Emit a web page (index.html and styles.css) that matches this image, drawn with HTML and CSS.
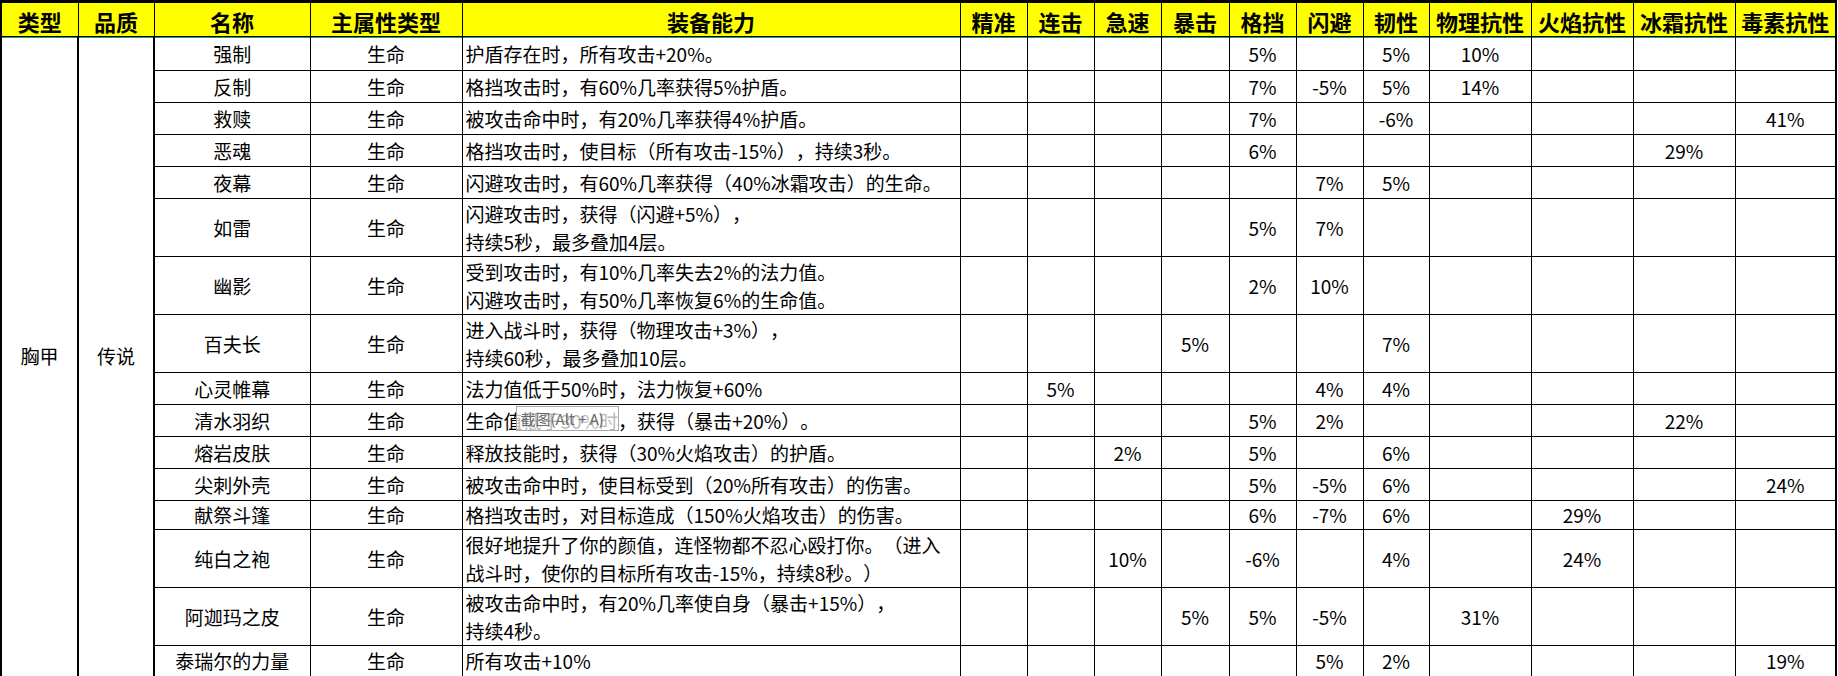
FILE: index.html
```html
<!DOCTYPE html>
<html lang="zh-CN">
<head>
<meta charset="utf-8">
<title>胸甲 传说</title>
<link rel="stylesheet" href="styles.css">
</head>
<body>
<table class="sheet">
  <colgroup>
    <col class="c-type"><col class="c-qual"><col class="c-name"><col class="c-main"><col class="c-desc">
    <col class="c-s"><col class="c-s"><col class="c-s"><col class="c-s8"><col class="c-s"><col class="c-s"><col class="c-s6">
    <col class="c-r"><col class="c-r"><col class="c-r"><col class="c-r1">
  </colgroup>
  <thead>
    <tr class="head">
      <th>类型</th><th>品质</th><th>名称</th><th>主属性类型</th><th>装备能力</th>
      <th>精准</th><th>连击</th><th>急速</th><th>暴击</th><th>格挡</th><th>闪避</th><th>韧性</th>
      <th>物理抗性</th><th>火焰抗性</th><th>冰霜抗性</th><th>毒素抗性</th>
    </tr>
  </thead>
  <tbody>
    <tr class="r34 first">
      <td class="type" rowspan="16">胸甲</td><td class="qual" rowspan="16">传说</td>
      <td>强制</td><td>生命</td><td class="desc">护盾存在时，所有攻击+20%。</td>
      <td></td><td></td><td></td><td></td><td>5%</td><td></td><td>5%</td><td>10%</td><td></td><td></td><td class="last"></td>
    </tr>
    <tr class="r32">
      <td>反制</td><td>生命</td><td class="desc">格挡攻击时，有60%几率获得5%护盾。</td>
      <td></td><td></td><td></td><td></td><td>7%</td><td>-5%</td><td>5%</td><td>14%</td><td></td><td></td><td class="last"></td>
    </tr>
    <tr class="r32">
      <td>救赎</td><td>生命</td><td class="desc">被攻击命中时，有20%几率获得4%护盾。</td>
      <td></td><td></td><td></td><td></td><td>7%</td><td></td><td>-6%</td><td></td><td></td><td></td><td class="last">41%</td>
    </tr>
    <tr class="r32">
      <td>恶魂</td><td>生命</td><td class="desc">格挡攻击时，使目标（所有攻击-15%），持续3秒。</td>
      <td></td><td></td><td></td><td></td><td>6%</td><td></td><td></td><td></td><td></td><td>29%</td><td class="last"></td>
    </tr>
    <tr class="r32">
      <td>夜幕</td><td>生命</td><td class="desc">闪避攻击时，有60%几率获得（40%冰霜攻击）的生命。</td>
      <td></td><td></td><td></td><td></td><td></td><td>7%</td><td>5%</td><td></td><td></td><td></td><td class="last"></td>
    </tr>
    <tr class="r58">
      <td>如雷</td><td>生命</td><td class="desc">闪避攻击时，获得（闪避+5%），<br>持续5秒，最多叠加4层。</td>
      <td></td><td></td><td></td><td></td><td>5%</td><td>7%</td><td></td><td></td><td></td><td></td><td class="last"></td>
    </tr>
    <tr class="r58">
      <td>幽影</td><td>生命</td><td class="desc">受到攻击时，有10%几率失去2%的法力值。<br>闪避攻击时，有50%几率恢复6%的生命值。</td>
      <td></td><td></td><td></td><td></td><td>2%</td><td>10%</td><td></td><td></td><td></td><td></td><td class="last"></td>
    </tr>
    <tr class="r58">
      <td>百夫长</td><td>生命</td><td class="desc">进入战斗时，获得（物理攻击+3%），<br>持续60秒，最多叠加10层。</td>
      <td></td><td></td><td></td><td>5%</td><td></td><td></td><td>7%</td><td></td><td></td><td></td><td class="last"></td>
    </tr>
    <tr class="r32">
      <td>心灵帷幕</td><td>生命</td><td class="desc">法力值低于50%时，法力恢复+60%</td>
      <td></td><td>5%</td><td></td><td></td><td></td><td>4%</td><td>4%</td><td></td><td></td><td></td><td class="last"></td>
    </tr>
    <tr class="r32">
      <td>清水羽织</td><td>生命</td><td class="desc tipcell">生命值低于30%时，获得（暴击+20%）。<span class="tip">截图(Alt + A)</span></td>
      <td></td><td></td><td></td><td></td><td>5%</td><td>2%</td><td></td><td></td><td></td><td>22%</td><td class="last"></td>
    </tr>
    <tr class="r32">
      <td>熔岩皮肤</td><td>生命</td><td class="desc">释放技能时，获得（30%火焰攻击）的护盾。</td>
      <td></td><td></td><td>2%</td><td></td><td>5%</td><td></td><td>6%</td><td></td><td></td><td></td><td class="last"></td>
    </tr>
    <tr class="r32">
      <td>尖刺外壳</td><td>生命</td><td class="desc">被攻击命中时，使目标受到（20%所有攻击）的伤害。</td>
      <td></td><td></td><td></td><td></td><td>5%</td><td>-5%</td><td>6%</td><td></td><td></td><td></td><td class="last">24%</td>
    </tr>
    <tr class="r28">
      <td>献祭斗篷</td><td>生命</td><td class="desc">格挡攻击时，对目标造成（150%火焰攻击）的伤害。</td>
      <td></td><td></td><td></td><td></td><td>6%</td><td>-7%</td><td>6%</td><td></td><td>29%</td><td></td><td class="last"></td>
    </tr>
    <tr class="r58">
      <td>纯白之袍</td><td>生命</td><td class="desc">很好地提升了你的颜值，连怪物都不忍心殴打你。（进入<br>战斗时，使你的目标所有攻击-15%，持续8秒。）</td>
      <td></td><td></td><td>10%</td><td></td><td>-6%</td><td></td><td>4%</td><td></td><td>24%</td><td></td><td class="last"></td>
    </tr>
    <tr class="r58">
      <td>阿迦玛之皮</td><td>生命</td><td class="desc">被攻击命中时，有20%几率使自身（暴击+15%），<br>持续4秒。</td>
      <td></td><td></td><td></td><td>5%</td><td>5%</td><td>-5%</td><td></td><td>31%</td><td></td><td></td><td class="last"></td>
    </tr>
    <tr class="r31 lastrow">
      <td>泰瑞尔的力量</td><td>生命</td><td class="desc">所有攻击+10%</td>
      <td></td><td></td><td></td><td></td><td></td><td>5%</td><td>2%</td><td></td><td></td><td></td><td class="last">19%</td>
    </tr>
  </tbody>
</table>
<div class="selbar"></div>
</body>
</html>
```

FILE: styles.css
```css
html, body {
  margin: 0;
  padding: 0;
  background: #ffffff;
}

body {
  font-family: "Noto Sans CJK SC", "Noto Sans", sans-serif;
  color: #000000;
  text-spacing-trim: space-all;
}

.sheet {
  border-collapse: collapse;
  table-layout: fixed;
  width: 1837px;
}

.c-type { width: 77px; }
.c-qual { width: 76px; }
.c-name { width: 156px; }
.c-main { width: 152px; }
.c-desc { width: 498px; }
.c-s { width: 67px; }
.c-s8 { width: 68px; }
.c-s6 { width: 66px; }
.c-r { width: 102px; }
.c-r1 { width: 101px; }

.sheet th {
  background: #ffff00;
  font-size: 22px;
  font-weight: 700;
  line-height: 24px;
  border: 1px solid #000;
  border-top: 3px solid #000;
  padding: 3px 0 0 0;
  height: 30px;
  white-space: nowrap;
  text-align: center;
  vertical-align: middle;
}

.sheet th:first-child { border-left: 2px solid #000; }
.sheet th:last-child { border-right: 2px solid #000; }

.sheet td {
  border: 1px solid #000;
  font-size: 19px;
  line-height: 28px;
  padding: 0;
  text-align: center;
  vertical-align: middle;
  white-space: nowrap;
  text-spacing-trim: space-all;
}

.sheet td.desc {
  text-align: left;
  padding-left: 3px;
}

.sheet td.type {
  border-left: 2px solid #000;
  border-right: 2px solid #000;
  border-bottom: 2px solid #000;
}

.sheet td.qual {
  border-right: 2px solid #000;
  border-bottom: 2px solid #000;
}

.sheet td.last { border-right: 2px solid #000; }
.sheet tr.lastrow td { border-bottom: 2px solid #000; }

.sheet tr.first td {
  box-shadow: inset 0 1px 0 #21a366;
}

.r34 { height: 34px; }
.r32 { height: 32px; }
.r58 { height: 58px; }
.r28 { height: 28px; }
.r31 { height: 31px; }

.tipcell { position: relative; }

.tip {
  position: absolute;
  left: 53px;
  top: 1px;
  width: 103px;
  height: 25px;
  border: 1px solid #a8a8a8;
  background: rgba(255, 255, 255, 0.72);
  color: #6a6a6a;
  font-size: 15px;
  line-height: 23px;
  padding-left: 4px;
  box-sizing: border-box;
}

.selbar {
  height: 2px;
  background: #2fa0da;
}
```
